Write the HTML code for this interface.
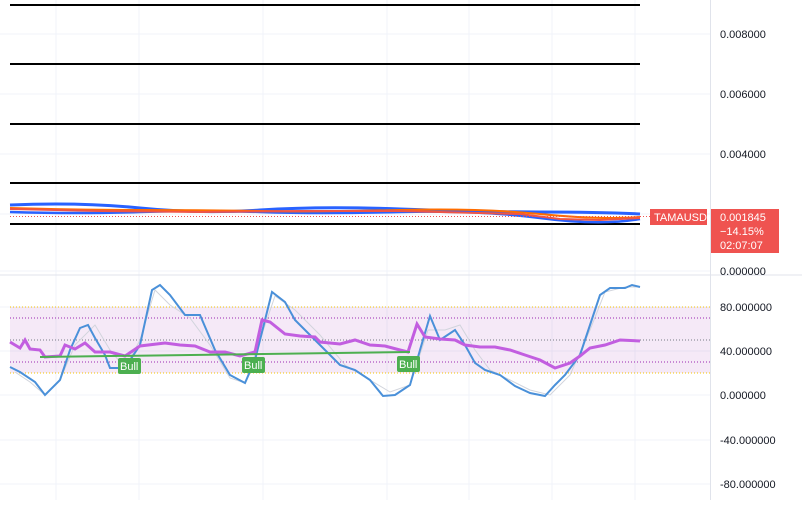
<!DOCTYPE html><html><head><style>body{margin:0;background:#fff;width:802px;height:500px;overflow:hidden;font-family:"Liberation Sans",sans-serif}</style></head><body>
<svg width="802" height="500" xmlns="http://www.w3.org/2000/svg" font-family="Liberation Sans" font-size="11">
<g stroke="#f0f3fa" stroke-width="1">
<line x1="56" y1="0" x2="56" y2="500"/><line x1="139" y1="0" x2="139" y2="500"/><line x1="263" y1="0" x2="263" y2="500"/><line x1="387" y1="0" x2="387" y2="500"/><line x1="469" y1="0" x2="469" y2="500"/><line x1="552" y1="0" x2="552" y2="500"/><line x1="635" y1="0" x2="635" y2="500"/>
<line x1="0" y1="34" x2="710" y2="34"/><line x1="0" y1="94" x2="710" y2="94"/><line x1="0" y1="154" x2="710" y2="154"/><line x1="0" y1="214" x2="710" y2="214"/><line x1="0" y1="271" x2="710" y2="271"/>
<line x1="0" y1="307" x2="710" y2="307"/><line x1="0" y1="351" x2="710" y2="351"/><line x1="0" y1="395" x2="710" y2="395"/><line x1="0" y1="440" x2="710" y2="440"/><line x1="0" y1="484" x2="710" y2="484"/>
</g>
<line x1="0" y1="275" x2="802" y2="275" stroke="#e0e3eb"/>
<line x1="710.5" y1="0" x2="710.5" y2="500" stroke="#e0e3eb"/>
<g stroke="#000" stroke-width="2">
<line x1="10" y1="5" x2="640" y2="5"/><line x1="10" y1="64" x2="640" y2="64"/><line x1="10" y1="124" x2="640" y2="124"/><line x1="10" y1="183" x2="640" y2="183"/><line x1="10" y1="224" x2="640" y2="224"/></g>
<path d="M10 205 Q80 202 140 208 T260 210 T400 209 T540 212 T640 214" stroke="#2962ff" stroke-width="3" fill="none"/>
<path d="M10 212 Q80 214 140 212 T260 212 T400 212 T540 218 T640 219" stroke="#2962ff" stroke-width="2.5" fill="none"/>
<path d="M10 208 Q80 210 140 210 T260 211 T400 210 T540 214 T640 217" stroke="#ff6d00" stroke-width="2" fill="none"/>
<path d="M10 209 L100 211 L200 212 L300 211 L400 211 L520 214 L560 219 L600 220 L640 218" stroke="#f05545" stroke-width="2" fill="none"/>
<line x1="10" y1="216.5" x2="650" y2="216.5" stroke="#ef5350" stroke-dasharray="1,2"/>
<rect x="650" y="209" width="57" height="16" fill="#ef5350"/><text x="654" y="221" fill="#fff">TAMAUSD</text>
<rect x="711" y="209" width="68" height="44" fill="#ef5350"/>
<g fill="#fff"><text x="720" y="221">0.001845</text><text x="720" y="235">−14.15%</text><text x="720" y="249">02:07:07</text></g>
<g fill="#131722"><text x="720" y="38">0.008000</text><text x="720" y="98">0.006000</text><text x="720" y="158">0.004000</text><text x="720" y="275">0.000000</text>
<text x="720" y="311">80.000000</text><text x="720" y="355">40.000000</text><text x="720" y="399">0.000000</text><text x="720" y="444">-40.000000</text><text x="720" y="488">-80.000000</text></g>
<rect x="10" y="307" width="700" height="66" fill="#9c27b0" opacity="0.1"/>
<line x1="10" y1="307" x2="710" y2="307" stroke="#f5c400" stroke-dasharray="1,2"/>
<line x1="10" y1="373" x2="710" y2="373" stroke="#f5c400" stroke-dasharray="1,2"/>
<line x1="10" y1="318" x2="710" y2="318" stroke="#9c27b0" stroke-dasharray="1,2"/>
<line x1="10" y1="362" x2="710" y2="362" stroke="#9c27b0" stroke-dasharray="1,2"/>
<line x1="10" y1="340" x2="710" y2="340" stroke="#787b86" stroke-dasharray="1,2"/>
<path d="M15 372 L30 382 L45 395 L60 380 L75 345 L95 325 L110 350 L125 368 L140 340 L155 290 L170 305 L190 318 L210 345 L230 378 L245 383 L260 340 L275 296 L295 310 L320 335 L345 365 L370 380 L390 392 L410 385 L428 330 L445 330 L460 325 L475 350 L490 370 L510 380 L530 390 L550 395 L570 375 L590 330 L605 292 L625 287 L640 287" stroke="#d1d4dc" stroke-width="1" fill="none"/>
<path d="M10 367 L20 372 L35 382 L45 395 L60 380 L70 350 L80 328 L88 325 L95 338 L105 355 L110 368 L125 368 L140 345 L152 290 L160 285 L170 295 L185 315 L200 315 L215 350 L230 375 L245 383 L255 360 L265 320 L272 292 L285 302 L295 320 L310 335 L325 350 L340 365 L355 370 L370 380 L383 396 L395 395 L410 385 L420 350 L430 316 L440 340 L455 330 L465 345 L475 363 L485 370 L500 375 L515 386 L530 393 L545 396 L555 385 L565 375 L580 355 L590 325 L600 295 L610 288 L625 288 L632 285 L640 287" stroke="#4a90d9" stroke-width="2" fill="none"/>
<path d="M10 342 L20 348 L25 340 L30 349 L40 350 L45 357 L60 356 L65 345 L75 349 L85 343 L95 352 L110 352 L125 356 L140 346 L165 343 L180 345 L195 346 L210 352 L225 352 L240 356 L255 352 L262 320 L270 322 L285 334 L300 336 L315 337 L320 342 L340 344 L355 340 L370 345 L385 346 L400 350 L408 352 L417 324 L425 337 L440 339 L455 340 L465 345 L480 347 L495 347 L510 350 L525 355 L540 360 L555 368 L570 363 L580 356 L590 348 L605 345 L620 340 L640 341" stroke="#c25ee0" stroke-width="3" fill="none"/>
<line x1="40" y1="357" x2="410" y2="352" stroke="#4caf50" stroke-width="2"/>
<g font-size="11"><rect x="118" y="358" width="23" height="16" rx="2" fill="#4caf50"/><text x="120" y="370" fill="#fff">Bull</text>
<rect x="242" y="357" width="23" height="16" rx="2" fill="#4caf50"/><text x="244" y="369" fill="#fff">Bull</text>
<rect x="397" y="356" width="23" height="16" rx="2" fill="#4caf50"/><text x="399" y="368" fill="#fff">Bull</text></g>
</svg></body></html>
